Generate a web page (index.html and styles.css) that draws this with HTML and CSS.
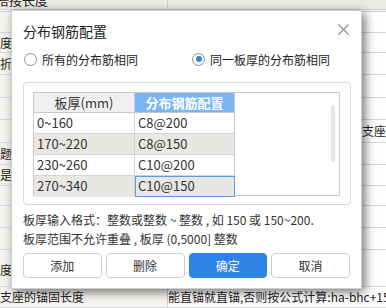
FILE: index.html
```html
<!DOCTYPE html>
<html lang="zh">
<head>
<meta charset="utf-8">
<link rel="stylesheet" href="styles.css">
</head>
<body>
<div class="sheet">
  <div class="row r-top"><div class="c1 head"><span class="cut">搭接长度</span></div><div class="c2 head"></div></div>
  <div class="row h21"><div class="c1"></div><div class="c2"></div></div>
  <div class="row h20"><div class="c1">度的</div><div class="c2"></div></div>
  <div class="row h22"><div class="c1">折弯</div><div class="c2"></div></div>
  <div class="row h23"><div class="c1"></div><div class="c2"></div></div>
  <div class="row h22"><div class="c1"></div><div class="c2"></div></div>
  <div class="row h23"><div class="c1"></div><div class="c2"><span class="tail">钢筋伸入支座</span></div></div>
  <div class="row h22 up"><div class="c1">题预</div><div class="c2"></div></div>
  <div class="row h21 up"><div class="c1">是否</div><div class="c2"></div></div>
  <div class="row h20"><div class="c1"></div><div class="c2"></div></div>
  <div class="row h22"><div class="c1"></div><div class="c2"></div></div>
  <div class="row h22"><div class="c1"></div><div class="c2"></div></div>
  <div class="row h37 low"><div class="c1">度设</div><div class="c2"></div></div>
  <div class="row h21"><div class="c1">支座的锚固长度</div><div class="c2">能直锚就直锚,否则按公式计算:ha-bhc+15d</div></div>
</div>

<div class="dialog">
  <div class="title-bar">
    <span class="title">分布钢筋配置</span>
    <svg class="close" width="11" height="11" viewBox="0 0 11 11"><path d="M0.5 0.5L10.5 10.5M10.5 0.5L0.5 10.5" stroke="#8a8a8a" stroke-width="1.2" fill="none"/></svg>
  </div>
  <div class="radios">
    <label class="radio"><span class="dot"></span>所有的分布筋相同</label>
    <label class="radio on"><span class="dot"></span>同一板厚的分布筋相同</label>
  </div>
  <div class="group">
    <div class="grid-box">
      <div class="grid">
        <div class="hc">板厚(mm)</div><div class="hc blue">分布钢筋配置</div>
        <div class="cell">0~160</div><div class="cell">C8@200</div>
        <div class="cell alt">170~220</div><div class="cell alt">C8@150</div>
        <div class="cell">230~260</div><div class="cell">C10@200</div>
        <div class="cell alt">270~340</div><div class="cell alt sel">C10@150</div>
      </div>
      <div class="scroll"></div>
    </div>
  </div>
  <div class="help">
    <p>板厚输入格式：整数或整数 ~ 整数 , 如 150 或 150~200.</p>
    <p>板厚范围不允许重叠 , 板厚 (0,5000] 整数</p>
  </div>
  <div class="buttons">
    <button class="btn">添加</button>
    <button class="btn">删除</button>
    <button class="btn primary">确定</button>
    <button class="btn">取消</button>
  </div>
</div>
</body>
</html>
```
FILE: styles.css
```css
html, body {
  margin: 0;
  padding: 0;
}
body {
  width: 386px;
  height: 308px;
  overflow: hidden;
  position: relative;
  background: #ffffff;
  font-family: "Noto Sans CJK SC", "Noto Sans", sans-serif;
  color: #333;
}
.sheet {
  display: flex;
  flex-direction: column;
  font-size: 12px;
  color: #222;
}
.row {
  display: grid;
  grid-template-columns: 168px 1fr;
  border-bottom: 1px solid #d9d9d9;
  box-sizing: border-box;
}
.row > div {
  overflow: hidden;
  white-space: nowrap;
  display: flex;
  align-items: center;
  line-height: 18px;
}
.c1 {
  background: #f6f5f1;
  border-right: 1px solid #cfcfcf;
}
.c2 { background: #fff; }
.head { background: #ecebe6 !important; align-items: flex-end !important; }
.r-top { height: 12px; border-bottom: 3px double #c9c9c9; }
.cut { margin-left: -4px; font-size: 13px; }
.h20 { height: 20px; }
.h21 { height: 21px; }
.h22 { height: 22px; }
.h23 { height: 23px; }
.h37 { height: 37px; }
.up .c1 { align-items: flex-end; padding-bottom: 1px; }
.low .c1 { align-items: flex-end; padding-bottom: 7px; }
.tail { margin-left: 146px; }

.dialog {
  position: absolute;
  left: 11px;
  top: 10px;
  width: 351px;
  height: 279px;
  box-sizing: border-box;
  background: #fff;
  border: 1px solid #cfcfcf;
  box-shadow: 3px 3px 10px rgba(0,0,0,0.55);
  padding: 0 10px 0 11px;
  display: flex;
  flex-direction: column;
}
.title-bar {
  display: flex;
  justify-content: space-between;
  align-items: center;
  height: 20px;
  margin-top: 10px;
}
.title {
  font-size: 14px;
  color: #222;
  line-height: 20px;
}
.close { margin-right: 2px; margin-top: -4px; }
.radios {
  display: flex;
  margin-top: 9px;
  height: 18px;
  align-items: center;
  font-size: 12px;
  color: #222;
}
.radio {
  display: flex;
  align-items: center;
  gap: 5px;
}
.radio:first-child { width: 168px; }
.dot {
  width: 11px;
  height: 11px;
  border: 1px solid #8e8e8e;
  border-radius: 50%;
  box-sizing: content-box;
  background: #fff;
  position: relative;
  margin-left: 1px;
}
.radio.on .dot::after {
  content: "";
  position: absolute;
  left: 2.5px;
  top: 2.5px;
  width: 6px;
  height: 6px;
  border-radius: 50%;
  background: #2d84e6;
}
.group {
  margin-top: 14px;
  height: 123px;
  border: 1px solid #dadada;
  border-radius: 4px;
  box-sizing: border-box;
  padding: 9px 10px 0 9px;
}
.grid-box {
  height: 104px;
  border: 1px solid #c8c8c8;
  box-sizing: border-box;
  position: relative;
}
.grid {
  display: grid;
  grid-template-columns: 101px 100px;
  grid-template-rows: 20px repeat(4, 21px);
  width: 201px;
}
.hc {
  background: #f0f0f0;
  border-bottom: 1px solid #c8c8c8;
  border-right: 1px solid #d0d0d0;
  font-size: 13px;
  color: #333;
  text-align: center;
  line-height: 19px;
}
.hc.blue {
  background: #7ab6f4;
  color: #fff;
  font-weight: bold;
  border-right: 1px solid #c8c8c8;
}
.cell {
  background: #fff;
  border-bottom: 1px solid #d4d4d4;
  border-right: 1px solid #d4d4d4;
  font-size: 13px;
  color: #333;
  padding-left: 3px;
  line-height: 20px;
  box-sizing: border-box;
}
.cell:nth-child(even) { border-right-color: #c8c8c8; }
.cell.alt { background: #e8e7e3; }
.grid .cell:nth-last-child(-n+2) { border-bottom: none; }
.cell.sel {
  outline: 1px solid #5a9ee8;
  outline-offset: -1px;
}
.scroll {
  position: absolute;
  right: 4px;
  top: 12px;
  width: 4px;
  height: 57px;
  border-radius: 2px;
  background: #e6e6e6;
}
.help {
  margin-top: 5px;
  font-size: 12px;
  color: #333;
}
.help p {
  margin: 0;
  line-height: 19px;
  white-space: nowrap;
}
.buttons {
  margin-top: 5px;
  display: grid;
  grid-template-columns: repeat(4, 1fr);
  gap: 4px;
  height: 25px;
  padding-right: 1px;
}
.btn {
  font-family: inherit;
  font-size: 12px;
  color: #333;
  background: #fff;
  border: 1px solid #cfcfcf;
  border-radius: 4px;
  padding: 0;
}
.btn.primary {
  background: #2d84e6;
  border-color: #2d84e6;
  color: #fff;
}
```
